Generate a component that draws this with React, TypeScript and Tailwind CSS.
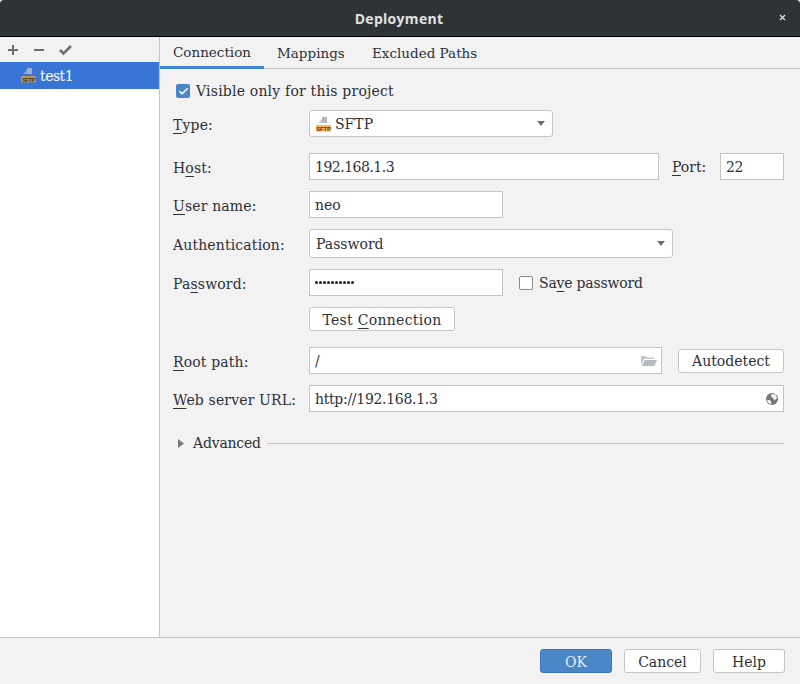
import { Check, X } from 'lucide-react';
import type { ReactNode } from 'react';

const SftpIcon = ({ muted = false }: { muted?: boolean }) => (
  <svg width="16" height="16" viewBox="0 0 16 16" className="shrink-0">
    <path d="M2 6 L6 2 V6 Z" fill={muted ? '#8fa3c4' : '#c9ccd0'} />
    <rect x="6" y="0" width="5" height="6" fill={muted ? '#9fb0cc' : '#b4b8bd'} />
    <rect x="0" y="8" width="15" height="6.5" fill={muted ? '#b8955a' : '#f5b860'} />
    <text x="7.5" y="13.6" textAnchor="middle" fontSize="5.6" fontWeight="700" fontFamily="'Liberation Sans', sans-serif" fill="#4a3a20">
      SFTP
    </text>
  </svg>
);

const Arrow = () => (
  <svg width="8" height="5" viewBox="0 0 8 5" className="shrink-0">
    <path d="M0 0 H8 L4 5 Z" fill="#6e6e6e" />
  </svg>
);

const Label = ({ children }: { children: ReactNode }) => (
  <div className="w-[136px] shrink-0 pt-[2px] text-[14px] leading-none tracking-[0.15px] text-[#2d3036]">{children}</div>
);

const Key = ({ children }: { children: ReactNode }) => (
  <span className="underline decoration-1 underline-offset-[3px]">{children}</span>
);

const Field = ({ className, children }: { className: string; children?: ReactNode }) => (
  <div className={`flex items-center justify-between border border-[#c4c4c4] bg-white pl-[5px] pr-[4px] text-[14px] text-[#2d3036] ${className}`}>
    {children}
  </div>
);

const Select = ({ className, children }: { className: string; children: ReactNode }) => (
  <div className={`flex items-center justify-between rounded-[3px] border border-[#c4c4c4] bg-white pl-[6px] pr-[7px] text-[14px] text-[#2d3036] ${className}`}>
    <span className="pt-[2px]">{children}</span>
    <Arrow />
  </div>
);

const Btn = ({ className, children }: { className: string; children: ReactNode }) => (
  <div className={`flex items-center justify-center rounded-[3px] border border-[#c4c4c4] bg-white pt-[2px] text-[14px] text-[#2d3036] ${className}`}>
    {children}
  </div>
);

export default function App() {
  return (
    <div className="flex h-[684px] w-[800px] flex-col overflow-hidden bg-[#f2f2f2] font-['DejaVu_Serif',serif]">
      {/* Title bar */}
      <div className="relative flex h-[37px] shrink-0 items-center justify-center rounded-t-[4px] border-b border-black bg-[#2e3436]">
        <span className="mr-[2px] font-['Open_Sans',sans-serif] text-[14px] font-bold tracking-[0.3px] text-[#e0e2e2]">Deployment</span>
        <X size={9} strokeWidth={3} color="#e8e8e8" className="absolute right-[13px] top-[13px]" />
      </div>

      <div className="flex min-h-0 flex-1">
        {/* Left list */}
        <div className="w-[160px] shrink-0 border-r border-[#c4c4c4]">
          <div className="flex h-[25px] items-center pl-[8px]">
            <svg width="64" height="12" viewBox="0 0 64 12">
              <path d="M0 6 H10 M5 1 V11 M26 6 H36" stroke="#6e6e6e" strokeWidth="2" fill="none" />
              <path d="M52 6 L55.5 9.5 L63 2" stroke="#6e6e6e" strokeWidth="2.6" fill="none" />
            </svg>
          </div>
          <div className="flex h-[27px] items-center gap-[3px] bg-[#3875d7] pl-[21px] text-[14px] tracking-[-0.5px] text-white">
            <SftpIcon muted />
            <span className="pt-[1px]">test1</span>
          </div>
          <div className="h-[548px] bg-white" />
        </div>

        {/* Right side */}
        <div className="flex min-w-0 flex-1 flex-col">
          <div className="flex h-[32px] shrink-0 border-b border-[#c4c4c4] text-[13.5px] text-[#2d3036]">
            <div className="flex h-[32px] w-[104px] items-center border-b-[3px] border-[#3d85d0] pt-[2px] pl-[13px]">Connection</div>
            <div className="flex w-[108px] items-center pl-[13px] pt-[1px]">Mappings</div>
            <div className="flex items-center pt-[1px] whitespace-nowrap">Excluded Paths</div>
          </div>

          <div className="flex flex-col pl-[13px] pr-4">
            <div className="mt-[14px] flex h-[16px] items-center gap-[6px] pl-[3px] text-[14px] tracking-[0.2px] text-[#2d3036]">
              <div className="flex h-[14px] w-[14px] items-center justify-center rounded-[2px] bg-[#4a86c8]">
                <Check size={11} strokeWidth={3.5} color="white" />
              </div>
              Visible only for this project
            </div>

            <div className="mt-[11px] flex items-center">
              <Label><Key>T</Key>ype:</Label>
              <Select className="h-[27px] w-[244px]">
                <span className="flex items-center gap-[3px]"><SftpIcon />SFTP</span>
              </Select>
            </div>

            <div className="mt-[16px] flex items-center">
              <Label>H<Key>o</Key>st:</Label>
              <Field className="h-[27px] w-[350px] pt-[2px] tracking-[-0.5px]">192.168.1.3</Field>
              <div className="ml-[13px] w-[48px] pt-[2px] text-[14px] text-[#2d3036]"><Key>P</Key>ort:</div>
              <Field className="h-[27px] w-[64px] pt-[2px] tracking-[-0.5px]">22</Field>
            </div>

            <div className="mt-[11px] flex items-center">
              <Label><Key>U</Key>ser name:</Label>
              <Field className="h-[27px] w-[194px] pt-[2px]">neo</Field>
            </div>

            <div className="mt-[11px] flex items-center">
              <Label>Authentication:</Label>
              <Select className="h-[29px] w-[364px]">Password</Select>
            </div>

            <div className="mt-[11px] flex items-center">
              <Label>Pa<Key>s</Key>sword:</Label>
              <Field className="h-[27px] w-[194px]">
                <span className="flex gap-[1px]">
                  {Array.from({ length: 10 }).map((_, i) => (
                    <span key={i} className="h-[3px] w-[3px] rounded-full bg-[#16181c]" />
                  ))}
                </span>
              </Field>
              <div className="ml-[16px] flex items-center gap-[6px] text-[14px] tracking-[-0.2px] text-[#2d3036]">
                <div className="h-[14px] w-[14px] rounded-[2px] border border-[#8a8a8a] bg-white" />
                <span className="pt-[2px]">Sa<Key>v</Key>e password</span>
              </div>
            </div>

            <div className="mt-[11px] flex items-center pl-[136px]">
              <Btn className="h-[24px] w-[146px] tracking-[0.3px]">Test&nbsp;<Key>C</Key>onnection</Btn>
            </div>

            <div className="mt-[16px] flex items-center">
              <Label><Key>R</Key>oot path:</Label>
              <Field className="h-[27px] w-[353px]">
                <span className="pt-[2px]">/</span>
                <svg width="16" height="12" viewBox="0 0 16 12" className="shrink-0">
                  <path d="M0 1 H5 L6 2.5 H13 V4 H3 L0 10 Z" fill="#c0c6cc" />
                  <path d="M3.6 5 H16 L13.5 11 H0.8 Z" fill="#b4bcc4" />
                </svg>
              </Field>
              <Btn className="ml-[16px] h-[24px] w-[106px]">Autodetect</Btn>
            </div>

            <div className="mt-[11px] flex items-center">
              <Label><Key>W</Key>eb server URL:</Label>
              <Field className="h-[27px] w-[475px]">
                <span className="pt-[2px] tracking-[-0.3px]">http://192.168.1.3</span>
                <svg width="12" height="12" viewBox="0 0 12 12" className="mr-[1px] shrink-0">
                  <circle cx="6" cy="6" r="6" fill="#74797e" />
                  <path d="M5.5 1 L9.5 1.6 L11 5 L8.5 7.5 L7 5 L5 3.5 Z M1 7 L4 7 L5.5 9.5 L4.5 11.2 L2.2 9.8 Z" fill="#f2f2f2" />
                </svg>
              </Field>
            </div>

            <div className="mt-[22px] flex h-[18px] items-center">
              <svg width="6" height="9" viewBox="0 0 6 9" className="ml-[5px] shrink-0">
                <path d="M0 0 L6 4.5 L0 9 Z" fill="#7a7a7a" />
              </svg>
              <span className="ml-[9px] text-[14px] tracking-[-0.2px] text-[#2d3036]">Advanced</span>
              <div className="ml-[6px] h-px flex-1 bg-[#c4c4c4]" />
            </div>
          </div>
        </div>
      </div>

      {/* Footer */}
      <div className="flex h-[47px] shrink-0 items-start justify-end gap-[12px] border-t border-[#c4c4c4] pr-[15px] pt-[11px]">
        <Btn className="h-[24px] w-[72px] !border-[#3c76b8] !bg-[#4a86c8] !text-[#e8eef6]">OK</Btn>
        <Btn className="h-[24px] w-[77px]">Cancel</Btn>
        <Btn className="h-[24px] w-[72px]">Help</Btn>
      </div>
    </div>
  );
}
